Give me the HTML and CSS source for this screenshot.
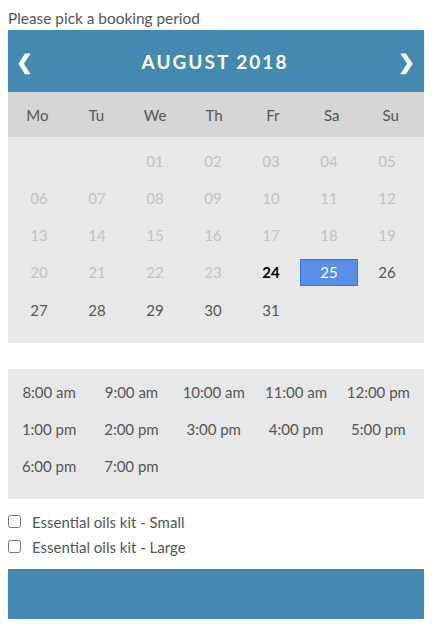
FILE: index.html
```html
<!DOCTYPE html>
<html lang="en">
<head>
<meta charset="UTF-8">
<meta name="viewport" content="width=device-width, initial-scale=1.0">
<title>Booking</title>
<link rel="stylesheet" href="styles.css">
</head>
<body>
<div class="booking">
    <div class="label">Please pick a booking period</div>

    <div class="calendar">
        <div class="cal-head">
            <span class="arrow">&#10094;</span>
            <span class="month">AUGUST 2018</span>
            <span class="arrow">&#10095;</span>
        </div>
        <div class="weekdays">
            <div>Mo</div><div>Tu</div><div>We</div><div>Th</div><div>Fr</div><div>Sa</div><div>Su</div>
        </div>
        <div class="days" id="days"></div>
    </div>

    <div class="times">
        <div>8:00 am</div><div>9:00 am</div><div>10:00 am</div><div>11:00 am</div><div>12:00 pm</div>
        <div>1:00 pm</div><div>2:00 pm</div><div>3:00 pm</div><div>4:00 pm</div><div>5:00 pm</div>
        <div>6:00 pm</div><div>7:00 pm</div>
    </div>

    <div class="extras">
        <label class="extra"><input type="checkbox"> Essential oils kit - Small</label>
        <label class="extra"><input type="checkbox"> Essential oils kit - Large</label>
    </div>

    <button class="submit"></button>
</div>

<script>
// build the day grid for August 2018 (starts on a Wednesday)
const days = document.getElementById('days');
for (let i = 0; i < 2; i++) {
    days.appendChild(document.createElement('div'));
}
for (let d = 1; d <= 31; d++) {
    const cell = document.createElement('div');
    cell.innerText = d < 10 ? '0' + d : d;
    if (d < 24) cell.classList.add('past');
    if (d === 24) cell.classList.add('today');
    if (d === 25) cell.classList.add('selected');
    days.appendChild(cell);
}
</script>
</body>
</html>
```

FILE: styles.css
```css
body {
    font-family: Lato, "Open Sans", sans-serif;
    margin: 8px;
    color: #555;
    font-size: 15px;
}

.label {
    font-size: 15.4px;
    line-height: 20px;
    margin-bottom: 2px;
}

.calendar {
    background-color: #e8e8e8;
}

.cal-head {
    background-color: #4389b0;
    color: #fff;
    height: 62px;
    display: flex;
    align-items: center;
    justify-content: space-between;
    padding: 0 10px 0 8px;
}

.arrow {
    font-size: 20px;
    font-weight: bold;
    width: 16px;
    text-align: center;
}

.month {
    font-size: 19px;
    font-weight: bold;
    letter-spacing: 2px;
}

.weekdays {
    background-color: #d6d6d6;
    height: 45px;
    display: grid;
    grid-template-columns: repeat(7, 1fr);
    align-items: center;
    text-align: center;
    padding-right: 4px;
}

.days {
    display: grid;
    grid-template-columns: repeat(7, 58px);
    grid-auto-rows: 37.25px;
    padding: 5px 0 15px 2px;
    text-align: center;
}

.days div {
    display: flex;
    align-items: center;
    justify-content: center;
}

.days .past {
    color: #c2c2c2;
}

.days .today {
    color: #000;
    font-weight: bold;
}

.days .selected {
    background-color: #5a8fe8;
    border: 1px solid #2a78f2;
    color: #fff;
    margin: 5px 0;
}

.times {
    background-color: #e8e8e8;
    margin-top: 26px;
    display: grid;
    grid-template-columns: repeat(5, 82.3px);
    grid-auto-rows: 37px;
    padding: 4px 0 15px;
    text-align: center;
    align-items: center;
}

.extras {
    padding-top: 10px;
}

.extra {
    display: flex;
    align-items: center;
    height: 25px;
}

.extra input {
    margin: 0 11px 0 0;
    width: 13px;
    height: 13px;
}

.submit {
    display: block;
    width: 100%;
    height: 50px;
    margin-top: 10px;
    background-color: #4389b0;
    border: none;
}
```
